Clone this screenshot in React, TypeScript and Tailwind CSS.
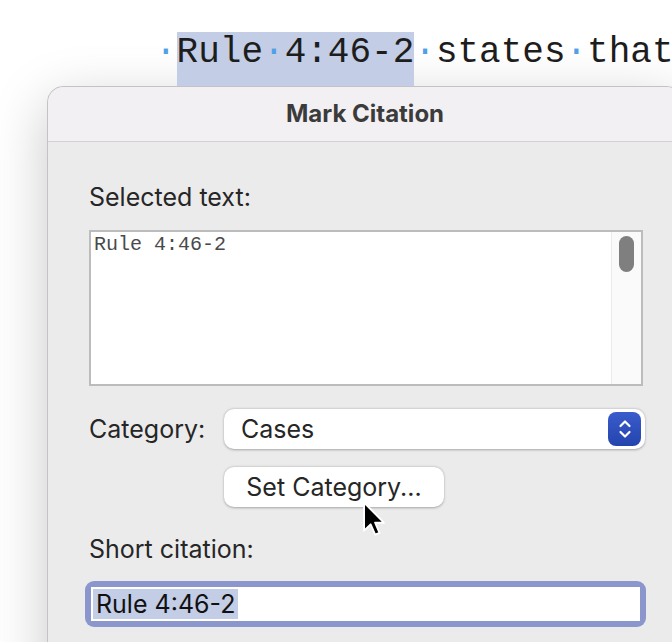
import { ReactNode } from "react";

const sans = { fontFamily: "Inter, 'Noto Sans', sans-serif" };
const mono = { fontFamily: "'Liberation Mono', 'DejaVu Sans Mono', monospace" };

function Dot(): ReactNode {
    return <span className="text-[#4fa0e4]">·</span>;
}

function Cursor(): ReactNode {
    return (
        <svg width="26" height="38" viewBox="0 0 19 27" className="absolute left-[362px] top-[500px]">
            <path d="M1.5 1.5 L1.5 22 L6.3 17.4 L9.6 25 L12.8 23.6 L9.6 16.2 L16 16.2 Z" fill="#000" stroke="#fff" strokeWidth="1.4" strokeLinejoin="round" />
        </svg>
    );
}

export default function App(): ReactNode {
    return (
        <div className="relative h-[642px] w-[672px] overflow-hidden bg-white" style={sans}>
            {/* document line behind the sheet */}
            <div className="h-[86px] overflow-hidden whitespace-pre pl-[155px] pt-[32px] text-[36px] leading-[41px] text-[#1d1d1d]" style={mono}>
                <Dot />
                <span className="bg-[#c3cde5] pb-[20px]">
                    Rule<Dot />4:46-2
                </span>
                <Dot />states<Dot />that
            </div>

            {/* dialog sheet */}
            <div className="ml-[47px] h-[600px] w-[636px] rounded-t-[16px] border border-[#c4c2c4] bg-[#ecebec] shadow-[0_16px_56px_rgba(0,0,0,0.22)]">
                {/* title bar */}
                <div className="flex h-[55px] items-center justify-center rounded-t-[16px] border-b border-[#d2d0d2] bg-[#f2f0f2] text-[24px] font-bold text-[#3b3b3b]">
                    Mark Citation
                </div>

                {/* body */}
                <div className="pl-[41px] pt-[40px] text-[25px] leading-[30px] text-[#262626]">
                    <div>Selected text:</div>

                    <div className="mt-[18px] flex h-[156px] w-[554px] border-2 border-[#bcbcbc] bg-white">
                        <div className="flex-1 pl-[3px] pt-[1px] text-[20px] leading-[24px] text-[#4a4a4a]" style={mono}>
                            Rule 4:46-2
                        </div>
                        <div className="flex w-[30px] justify-center border-l border-[#ebebeb] bg-[#fafafa] pt-[4px]">
                            <div className="h-[36px] w-[15px] rounded-full bg-[#7f7f7f]" />
                        </div>
                    </div>

                    <div className="mt-[23px] flex h-[40px] items-center">
                        <div className="w-[135px]">Category:</div>
                        <div className="flex h-[40px] w-[421px] items-center justify-between rounded-[10px] bg-white pl-[17px] pr-[4px] shadow-[0_0.5px_2.5px_rgba(0,0,0,0.3)]">
                            <span>Cases</span>
                            <div className="flex h-[34px] w-[33px] items-center justify-center rounded-[8px] bg-gradient-to-b from-[#3a5ccc] to-[#2444ad]">
                                <svg width="14" height="22" viewBox="0 0 14 22">
                                    <path d="M2.5 8 L7 3.5 L11.5 8" fill="none" stroke="#fff" strokeWidth="2.2" strokeLinecap="round" strokeLinejoin="round" />
                                    <path d="M2.5 14 L7 18.5 L11.5 14" fill="none" stroke="#fff" strokeWidth="2.2" strokeLinecap="round" strokeLinejoin="round" />
                                </svg>
                            </div>
                        </div>
                    </div>

                    <div className="ml-[135px] mt-[18px] flex h-[40px] w-[220px] items-center justify-center rounded-[10px] bg-white shadow-[0_0.5px_2.5px_rgba(0,0,0,0.3)]">
                        Set Category...
                    </div>

                    <div className="mt-[27px]">Short citation:</div>

                    <div className="-ml-[4px] mt-[17px] h-[46px] w-[561px] rounded-[9px] bg-[#8b96cc] p-[6px]">
                        <div className="flex h-[34px] items-center bg-white pl-[2px] text-[#111]">
                            <span className="bg-[#c3cde6] px-[3px]">Rule 4:46-2</span>
                        </div>
                    </div>
                </div>
            </div>

            <Cursor />
        </div>
    );
}
